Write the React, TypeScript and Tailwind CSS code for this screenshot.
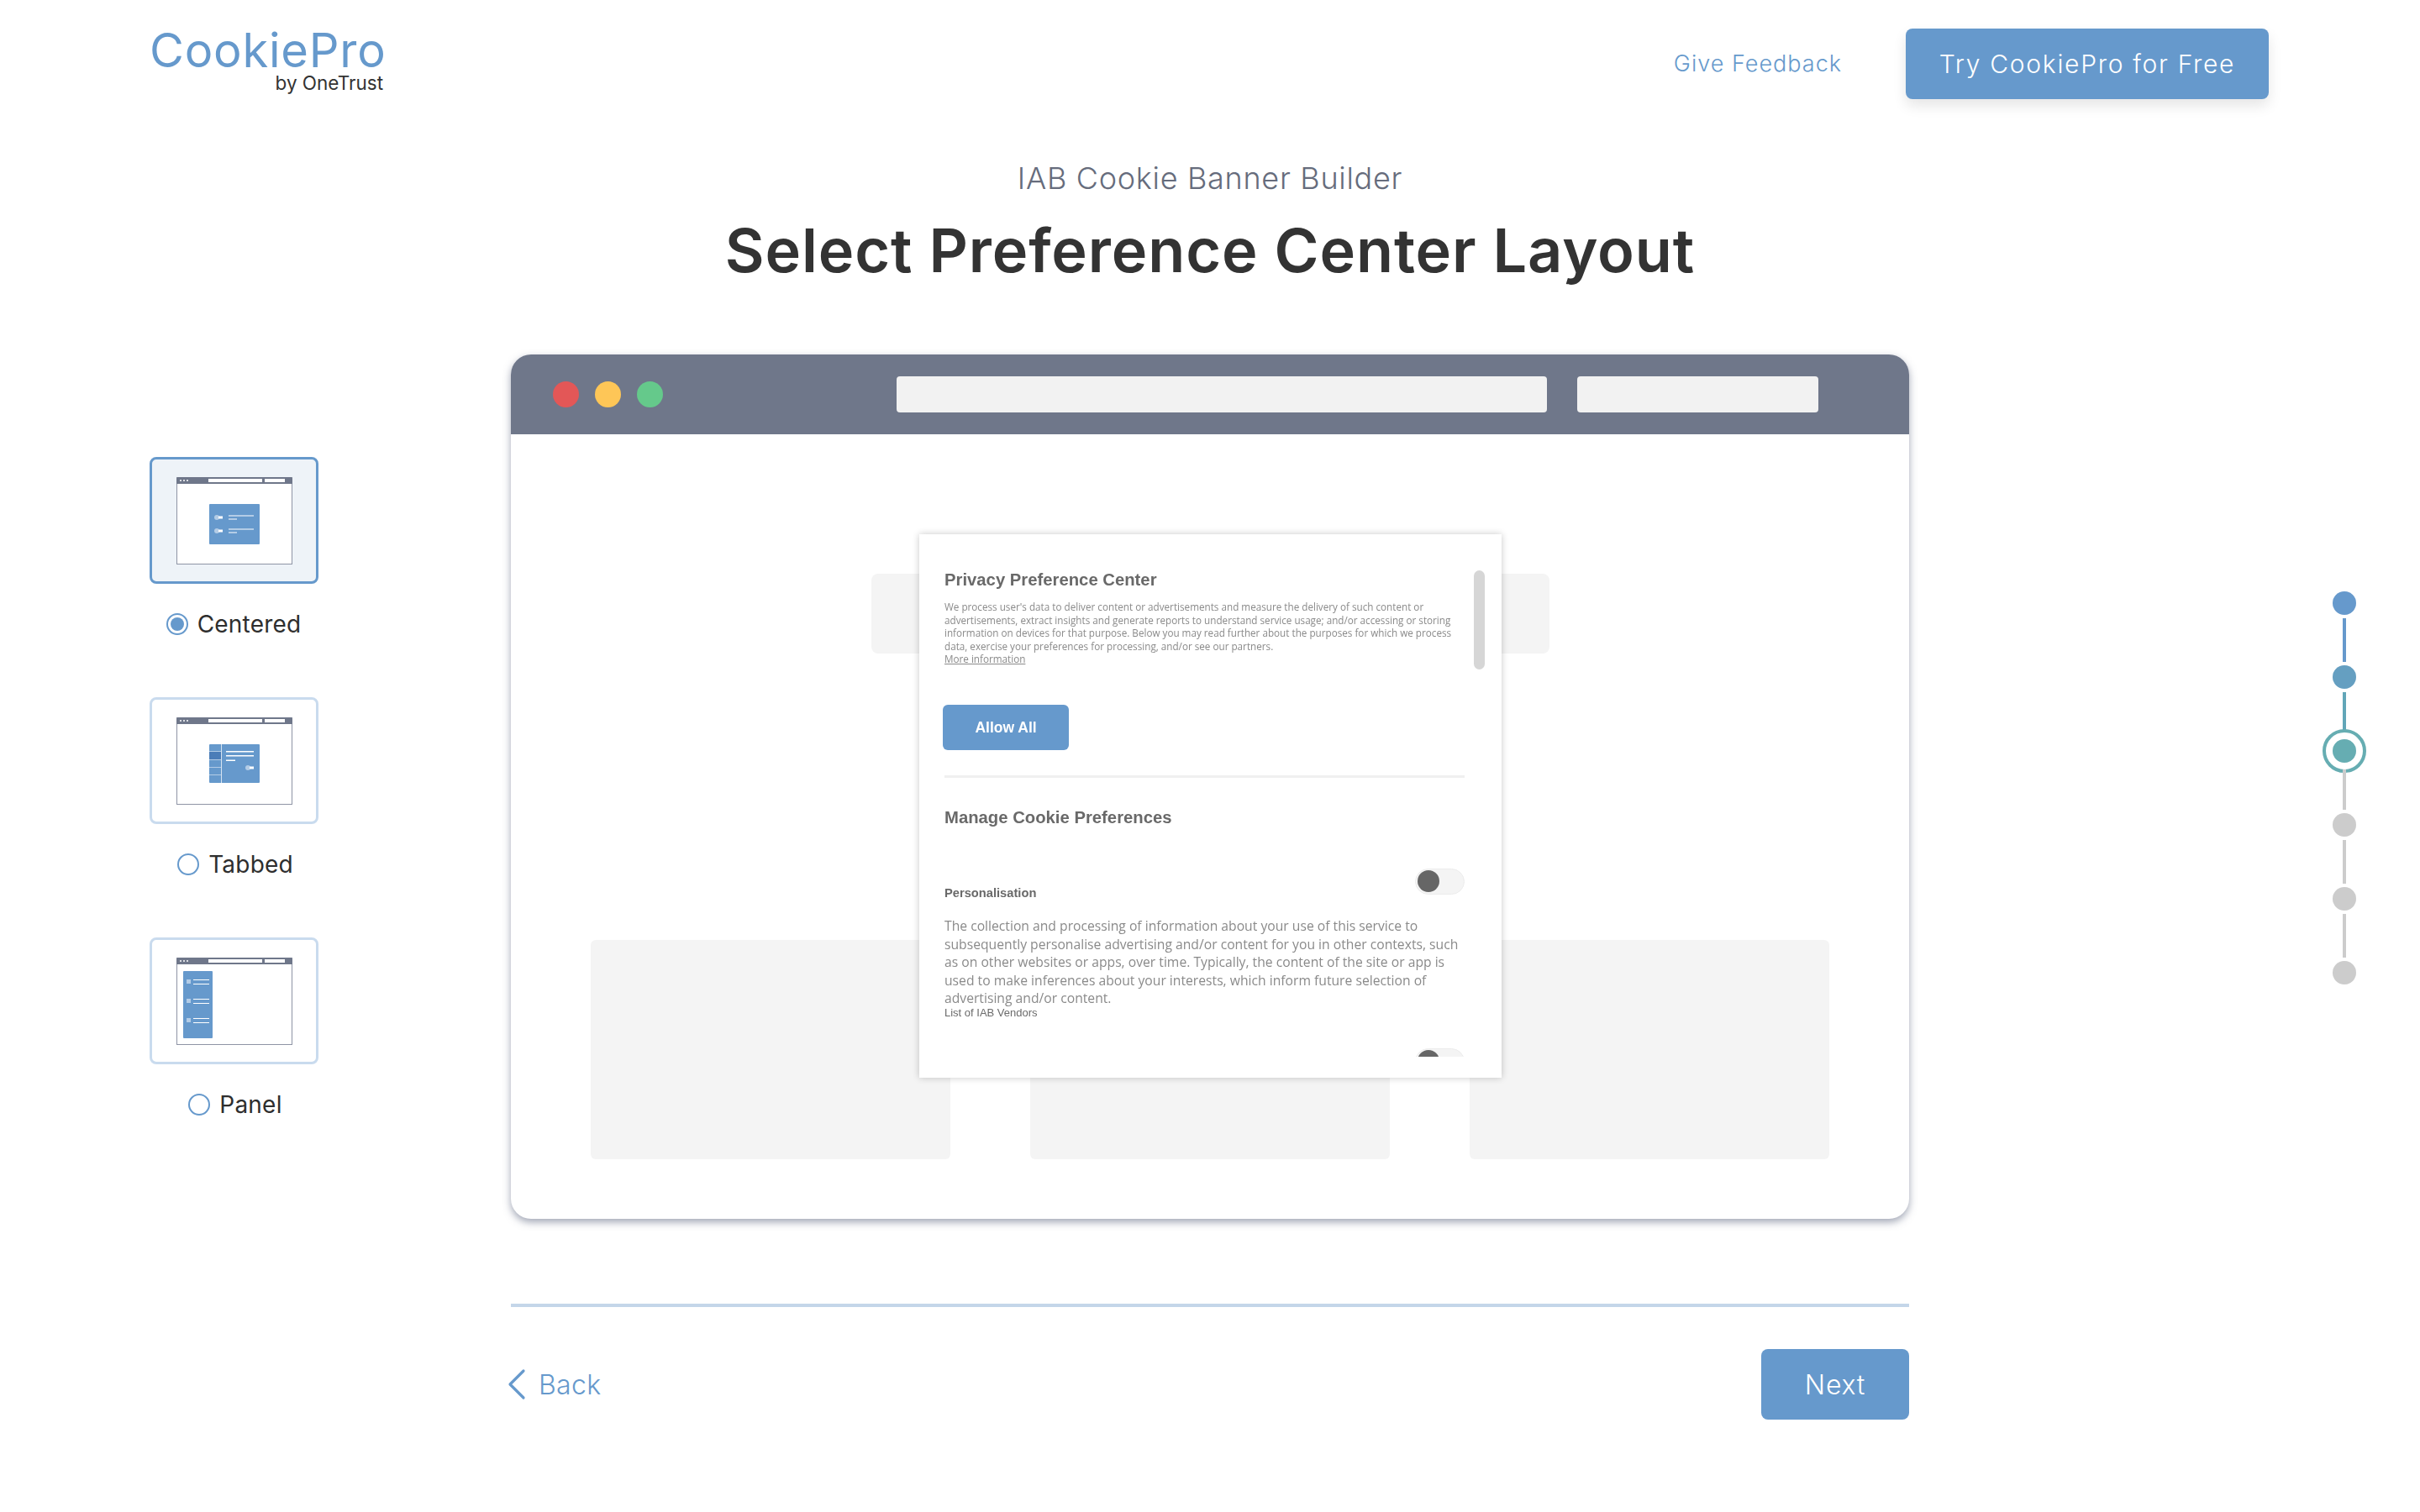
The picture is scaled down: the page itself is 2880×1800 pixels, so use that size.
import { ChevronLeft } from 'lucide-react';

const options = ['Centered', 'Tabbed', 'Panel'];

function Thumb({ kind }: { kind: string }) {
  return (
    <svg width="138" height="104" viewBox="0 0 138 104">
      <rect x="0.5" y="0.5" width="137" height="103" fill="#fff" stroke="#8e94a5" />
      <path d="M0 2a2 2 0 0 1 2-2h134a2 2 0 0 1 2 2v6H0z" fill="#6f778a" />
      <circle cx="5" cy="4" r="1" fill="#fff" />
      <circle cx="9" cy="4" r="1" fill="#fff" />
      <circle cx="13" cy="4" r="1" fill="#fff" />
      <rect x="38" y="2" width="64" height="4" fill="#fff" />
      <rect x="105" y="2" width="24" height="4" fill="#fff" />
      {kind === 'Centered' && (
        <g>
          <rect x="39" y="32" width="60" height="48" rx="1" fill="#6699cc" />
          <circle cx="48" cy="48" r="3" fill="#b3cce6" />
          <rect x="50" y="46.500" width="5" height="3" fill="#fff" />
          <rect x="62" y="45.500" width="30" height="1" fill="#fff" />
          <rect x="62" y="49.500" width="10" height="1" fill="#fff" />
          <circle cx="48" cy="64" r="3" fill="#b3cce6" />
          <rect x="50" y="62.500" width="5" height="3" fill="#fff" />
          <rect x="62" y="61.500" width="30" height="1" fill="#fff" />
          <rect x="62" y="65.500" width="10" height="1" fill="#fff" />
        </g>
      )}
      {kind === 'Tabbed' && (
        <g>
          <rect x="39" y="32" width="60" height="46" rx="1" fill="#6699cc" />
          <rect x="39" y="41" width="14" height="9" fill="#4b7db8" />
          <rect x="53" y="32" width="1" height="46" fill="#d6e3f1" />
          <rect x="39" y="40" width="14" height="1" fill="#b3cce6" />
          <rect x="39" y="50" width="14" height="1" fill="#b3cce6" />
          <rect x="39" y="59" width="14" height="1" fill="#b3cce6" />
          <rect x="39" y="68" width="14" height="1" fill="#b3cce6" />
          <rect x="59" y="40" width="33" height="1.500" fill="#fff" />
          <rect x="59" y="45" width="33" height="1.500" fill="#fff" />
          <rect x="59" y="50.500" width="11" height="1.500" fill="#fff" />
          <circle cx="85" cy="60" r="3" fill="#b3cce6" />
          <rect x="87" y="58.500" width="5" height="3" fill="#fff" />
        </g>
      )}
      {kind === 'Panel' && (
        <g>
          <rect x="8" y="16" width="35" height="80" rx="1" fill="#6699cc" />
          {[29, 52, 75].map((y) => (
            <g key={y}>
              <rect x="12" y={y - 3} width="5" height="5" fill="#b3cce6" />
              <rect x="20" y={y - 3} width="19" height="1" fill="#fff" />
              <rect x="20" y={y + 2} width="19" height="1" fill="#fff" />
            </g>
          ))}
        </g>
      )}
    </svg>
  );
}

function Toggle() {
  return (
    <div className="w-[59px] h-[31px] rounded-full bg-[#f4f4f4] border border-[#ececec] flex items-center pl-[2px]">
      <div className="w-[26px] h-[26px] rounded-full bg-[#666]" />
    </div>
  );
}

function Stepper() {
  return (
    <div className="flex flex-col items-center w-[28px]">
      <div className="w-[28px] h-[28px] rounded-full bg-[#6699cc]" />
      <div className="w-[4px] h-[52px] my-[4px] bg-[#6699cc]" />
      <div className="w-[28px] h-[28px] rounded-full bg-[#659fc1]" />
      <div className="w-[4px] h-[48px] mt-[4px] mb-[8px] bg-[#62a6b8]" />
      <div className="w-[28px] h-[28px] rounded-full bg-[#66adb2] outline-[4px] outline-offset-[8px] outline-solid outline-[#66adb2]" />
      <div className="w-[4px] h-[48px] mt-[8px] mb-[4px] bg-[#ccc]" />
      <div className="w-[28px] h-[28px] rounded-full bg-[#ccc]" />
      <div className="w-[4px] h-[52px] my-[4px] bg-[#ccc]" />
      <div className="w-[28px] h-[28px] rounded-full bg-[#ccc]" />
      <div className="w-[4px] h-[52px] my-[4px] bg-[#ccc]" />
      <div className="w-[28px] h-[28px] rounded-full bg-[#ccc]" />
    </div>
  );
}

function PreferenceCenter() {
  return (
    <div className="absolute left-[486px] top-[214px] w-[693px] h-[647px] bg-white shadow-[0_0_8px_rgba(0,0,0,0.22)]">
      <div className="relative h-[622px] overflow-hidden pl-[30px] pr-[44px] pt-[42px] font-['Liberation_Sans',sans-serif] blur-[0.4px]">
        {/* scrollbar */}
        <div className="absolute left-[660px] top-[43px] w-[13px] h-[118px] rounded-full bg-[#d6d6d6]" />
        <h3 className="text-[20.3px] leading-[24px] font-bold text-[#696969]">Privacy Preference Center</h3>
        <p className="mt-[13px] text-[11.7px] leading-[15.6px] text-[#8a8a8a] whitespace-nowrap font-['Open_Sans',sans-serif]">
          We process user's data to deliver content or advertisements and measure the delivery of such content or<br />
          advertisements, extract insights and generate reports to understand service usage; and/or accessing or storing<br />
          information on devices for that purpose. Below you may read further about the purposes for which we process<br />
          data, exercise your preferences for processing, and/or see our partners.<br />
          <span className="underline">More information</span>
        </p>
        <button className="mt-[46px] -ml-[2px] block w-[150px] h-[54px] rounded-[6px] bg-[#6699cc] text-white text-[17.5px] font-bold">Allow All</button>
        <div className="mt-[30px] h-[3px] w-[619px] bg-[#f0f0f0]" />
        <h3 className="mt-[35px] text-[20.3px] leading-[24px] font-bold text-[#696969]">Manage Cookie Preferences</h3>
        <div className="mt-[49px] flex justify-between items-start">
          <span className="mt-[21px] text-[14.7px] leading-[16px] font-bold text-[#696969]">Personalisation</span>
          <Toggle />
        </div>
        <p className="mt-[21px] text-[15.7px] leading-[21.6px] text-[#8a8a8a] whitespace-nowrap font-['Open_Sans',sans-serif]">
          The collection and processing of information about your use of this service to<br />
          subsequently personalise advertising and/or content for you in other contexts, such<br />
          as on other websites or apps, over time. Typically, the content of the site or app is<br />
          used to make inferences about your interests, which inform future selection of<br />
          advertising and/or content.
        </p>
        <div className="text-[13px] leading-[14px] -mt-[1px] text-[#6b6b6b]">List of IAB Vendors</div>
        <div className="mt-[35px] flex justify-end">
          <Toggle />
        </div>
      </div>
    </div>
  );
}

export default function App() {
  return (
    <div className="min-h-screen bg-white font-['Inter',sans-serif] text-[#333]">
      {/* Header */}
      <header className="flex items-start justify-between pl-[178px] pr-[180px] pt-[34px]">
        <div className="w-[278px] -mt-[2px]">
          <div className="text-[56px] leading-[56px] text-[#6699cc] tracking-[0.8px]">CookiePro</div>
          <div className="text-[22.5px] leading-[22px] text-right text-[#333]">by OneTrust</div>
        </div>
        <div className="flex items-center gap-[76px]">
          <a className="pt-[1px] text-[27px] font-light text-[#6699cc] tracking-[1px]">Give Feedback</a>
          <button className="w-[432px] h-[84px] rounded-[8px] bg-[#6699cc] text-white text-[30px] font-light tracking-[1.7px] shadow-[0_8px_16px_rgba(0,0,0,0.1)]">Try CookiePro for Free</button>
        </div>
      </header>

      <div className="text-center mt-[72px]">
        <div className="text-[36px] leading-[44px] font-light text-[#666c7c] tracking-[0.7px]">IAB Cookie Banner Builder</div>
        <h1 className="mt-[20px] text-[72px] leading-[88px] font-semibold text-[#333] tracking-[0.9px]">Select Preference Center Layout</h1>
      </div>

      <main className="flex mt-[80px]">
        {/* Layout options */}
        <div className="w-[608px] pl-[178px] pt-[122px] flex flex-col gap-[70px]">
          {options.map((o, i) => (
            <div key={o} className="w-[201px] flex flex-col items-center">
              <div className={`w-[201px] h-[151px] rounded-[8px] border-[3px] flex items-center justify-center ${i === 0 ? 'border-[#6699cc] bg-[#eef3f8]' : 'border-[#c9dbee] bg-white'}`}>
                <Thumb kind={o} />
              </div>
              <div className={`mt-[31px] h-[34px] flex items-center gap-[11px] text-[28px] tracking-[0.2px] text-[#2e2e2e] ${i === 0 ? '-ml-[1px]' : 'ml-[3px]'}`}>
                <span className="w-[26px] h-[26px] rounded-full border-[2px] border-[#6699cc] flex items-center justify-center">
                  {i === 0 && <span className="w-[16px] h-[16px] rounded-full bg-[#6699cc]" />}
                </span>
                {o}
              </div>
            </div>
          ))}
        </div>

        {/* Browser preview */}
        <div className="w-[1664px]">
          <div className="relative h-[1029px] rounded-[24px] bg-white shadow-[0_4px_10px_rgba(70,80,110,0.5)]">
            <div className="h-[95px] rounded-t-[24px] bg-[#6f778a] flex items-center pb-[1px]">
              <div className="ml-[50px] flex gap-[19px]">
                <div className="w-[31px] h-[31px] rounded-full bg-[#e35757]" />
                <div className="w-[31px] h-[31px] rounded-full bg-[#fec657]" />
                <div className="w-[31px] h-[31px] rounded-full bg-[#65c98b]" />
              </div>
              <div className="ml-[278px] w-[774px] h-[43px] rounded-[4px] bg-[#f2f2f2]" />
              <div className="ml-[36px] w-[287px] h-[43px] rounded-[4px] bg-[#f2f2f2]" />
            </div>
            <div className="mt-[166px] mx-auto w-[807px] h-[95px] rounded-[8px] bg-[#f4f4f4]" />
            <div className="mt-[341px] px-[95px] flex gap-[95px]">
              <div className="w-[428px] h-[261px] rounded-[6px] bg-[#f4f4f4]" />
              <div className="w-[428px] h-[261px] rounded-[6px] bg-[#f4f4f4]" />
              <div className="w-[428px] h-[261px] rounded-[6px] bg-[#f4f4f4]" />
            </div>
            <PreferenceCenter />
          </div>

          <div className="mt-[101px] h-[4px] bg-[#c4d6e9]" />

          <div className="mt-[50px] h-[84px] flex items-center justify-between">
            <a className="flex items-center text-[#6699cc] text-[32px] font-light tracking-[0.3px]">
              <ChevronLeft className="w-[64px] h-[64px] -ml-[25px] -mr-[6px]" strokeWidth={1.2} />
              <span className="pt-[2px]">Back</span>
            </a>
            <button className="w-[176px] h-[84px] rounded-[8px] bg-[#6699cc] text-white text-[32px] font-light tracking-[0.8px] pt-[2px]">Next</button>
          </div>
        </div>

        {/* Steps */}
        <div className="pl-[504px] pt-[282px]">
          <Stepper />
        </div>
      </main>
    </div>
  );
}
